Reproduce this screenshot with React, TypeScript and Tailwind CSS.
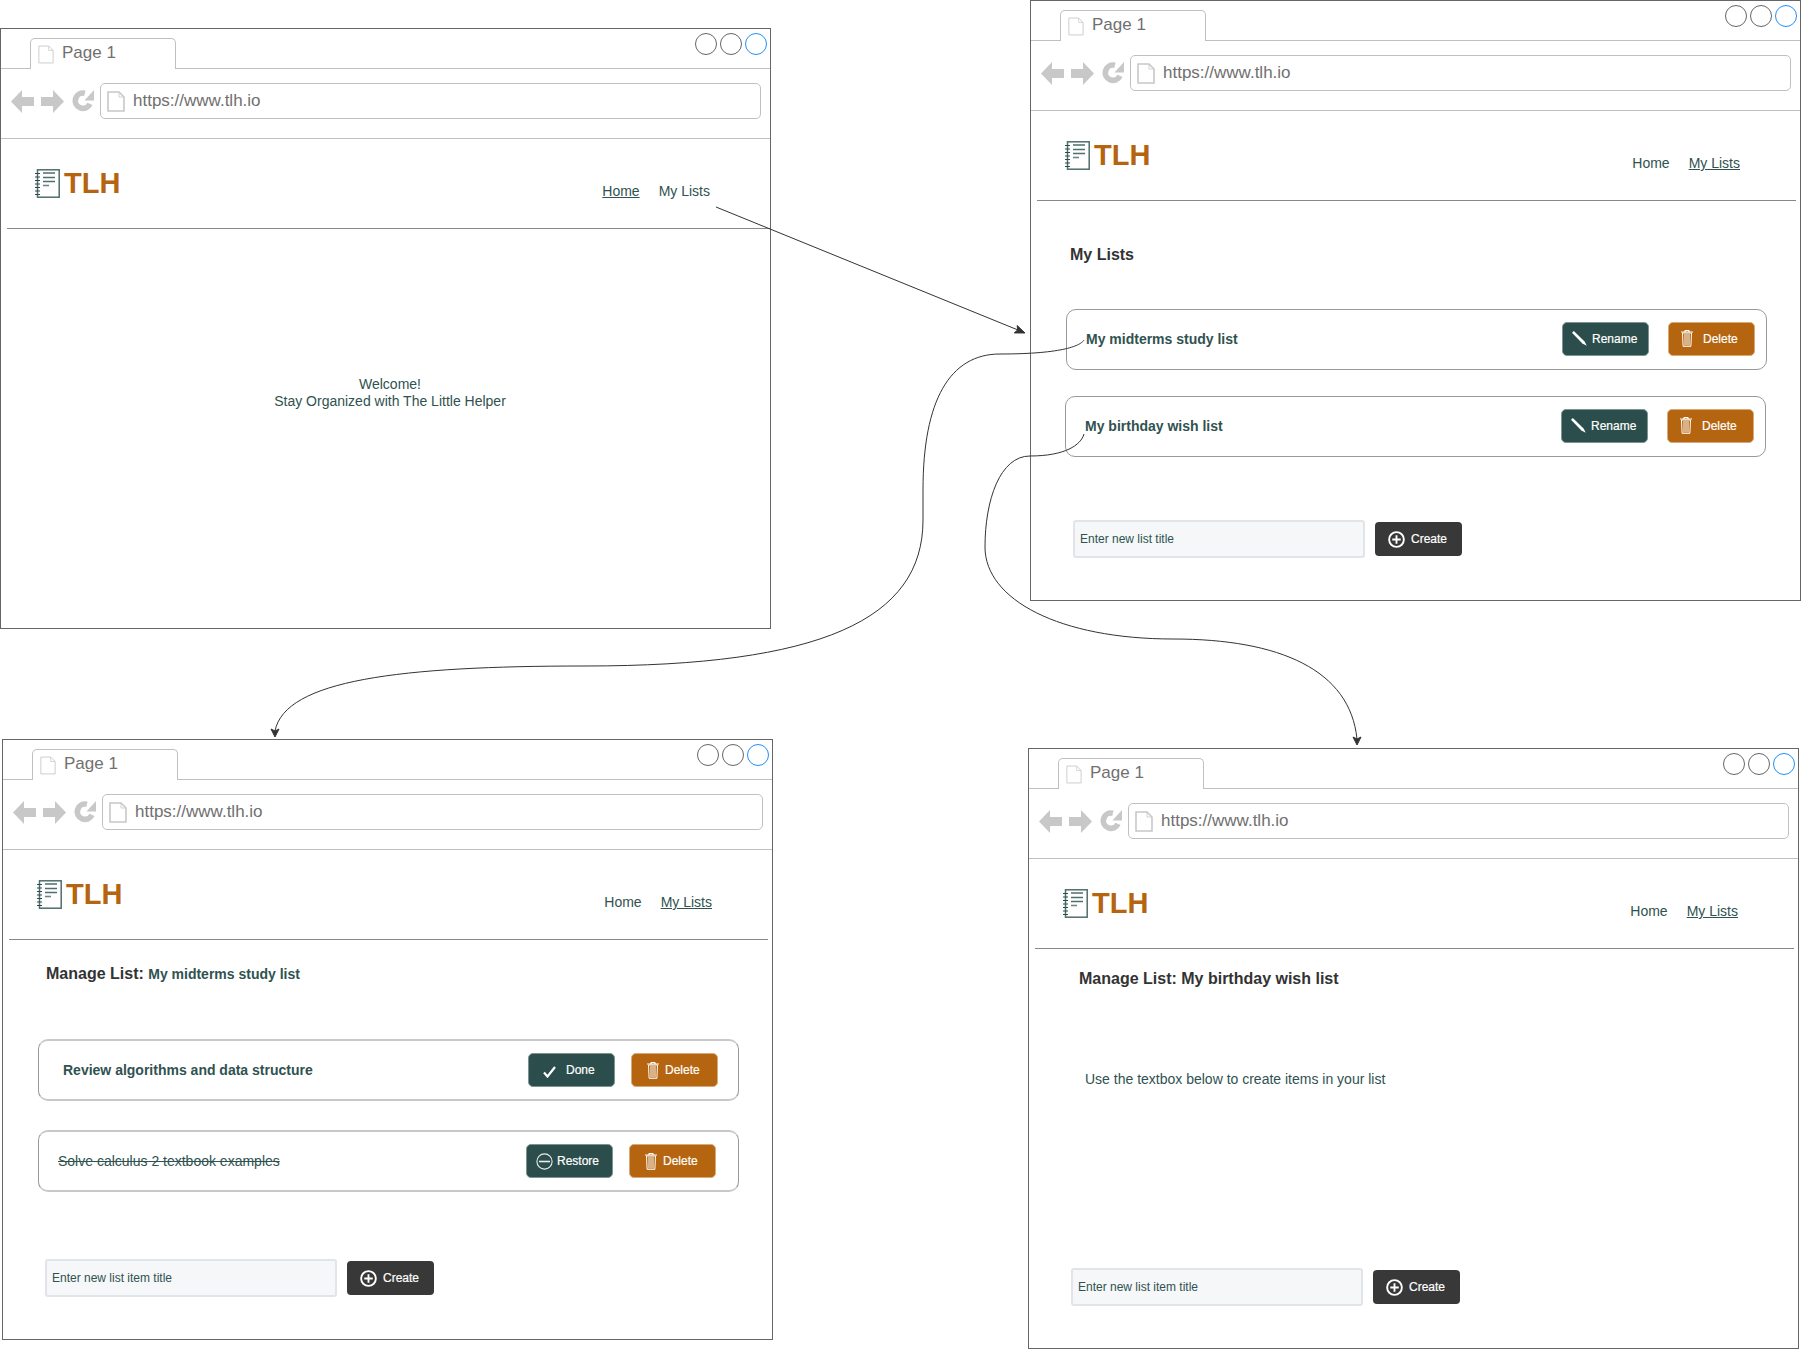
import type { ReactNode } from "react";

const PageIcon = ({ className, sw }: { className: string; sw: number }) => (
  <svg viewBox="0 0 18 21" className={className} fill="none" stroke="#c8c8c8" strokeWidth={sw}>
    <path d="M1 1h11l5 5v14H1z" />
    <path d="M12 1v5h5" strokeWidth={0.8} />
  </svg>
);

const NavArrows = () => (
  <div className="flex items-center h-[36px] shrink-0">
    <svg viewBox="0 0 23 23" className="w-[23px] h-[23px] mr-[7px]" fill="#c8c8c8">
      <path d="M0 11.5 11 0v7h12v9H11v7z" />
    </svg>
    <svg viewBox="0 0 23 23" className="w-[23px] h-[23px] mr-[8px]" fill="#c8c8c8">
      <path d="M23 11.5 12 0v7H0v9h12v7z" />
    </svg>
    <svg viewBox="0 0 23 23" className="w-[22px] h-[22px] mr-[6px]" fill="none">
      <path d="M18.8 14.5A8 8 0 1 1 13.5 3.4" stroke="#c8c8c8" strokeWidth={6} />
      <path d="M23 0V11H13z" fill="#c8c8c8" />
    </svg>
  </div>
);

const Notebook = () => (
  <svg viewBox="0 0 25 29" className="w-[25px] h-[29px] shrink-0" fill="none">
    <rect x="2.5" y="0.8" width="21.7" height="27.4" stroke="#4f6e6c" strokeWidth={1.5} />
    <path d="M0 4.5h5M0 8h5M0 11.5h5M0 15h5M0 18.5h5M0 22h5M0 25.5h5" stroke="#2b4e4c" strokeWidth={1.2} />
    <path d="M8 4h12M8 8.5h12M8 12.5h12" stroke="#4f6e6c" strokeWidth={1.3} />
    <path d="M8 16.5h6" stroke="#6d8785" strokeWidth={1.6} />
  </svg>
);

const Pencil = () => (
  <svg viewBox="0 0 15 15" className="w-[15px] h-[15px] shrink-0" fill="#fff">
    <path d="M1.8 0 12.6 10.6 14.8 14.8 10.4 12.4 0 1.8z" />
  </svg>
);

const Trash = () => (
  <svg viewBox="0 0 12 17" className="w-[12px] h-[17px] shrink-0" fill="none" stroke="#fff">
    <path d="M0 2h12M3.5 1.5 4.5.5h3l1 1" strokeWidth={1.2} />
    <path d="M1.5 3h9l-.6 13.3H2.1z" strokeWidth={1} />
    <path d="M4 4v11.5M6 4v11.5M8 4v11.5" strokeWidth={1} />
  </svg>
);

const Check = () => (
  <svg viewBox="0 0 13 12" className="w-[13px] h-[12px] shrink-0 mt-[3px]" fill="none" stroke="#fff" strokeWidth={2.2}>
    <path d="M1 6.5 4.5 10.5 12 1" />
  </svg>
);

const MinusCircle = () => (
  <svg viewBox="0 0 17 17" className="w-[17px] h-[17px] shrink-0" fill="none" stroke="#e8eded">
    <circle cx="8.5" cy="8.5" r="7.6" strokeWidth={1.1} />
    <path d="M3 8.5h11" strokeWidth={1.6} />
  </svg>
);

const PlusCircle = () => (
  <svg viewBox="0 0 18 18" className="w-[17px] h-[17px] shrink-0" fill="none" stroke="#fff" strokeWidth={2}>
    <circle cx="9" cy="9" r="7.8" />
    <path d="M4.5 9h9M9 4.5v9" />
  </svg>
);

const Button = ({
  tone,
  icon,
  label,
  pad,
  gap,
}: {
  tone: string;
  icon: ReactNode;
  label: string;
  pad: string;
  gap: string;
}) => (
  <div className={`flex items-center w-[87px] h-[34px] rounded-[5px] border text-xs text-white shrink-0 ${tone} ${pad} ${gap}`}>
    {icon}
    <span className="leading-[14px] [-webkit-text-stroke:0.2px_white]">{label}</span>
  </div>
);

const teal = "bg-[#2b4e4c] border-[#7c9492]";
const orange = "bg-[#b5650f] border-[#d8aa78]";

const CreateRow = ({ placeholder }: { placeholder: string }) => (
  <div className="flex items-center ml-[42px]">
    <input
      readOnly
      placeholder={placeholder}
      className="w-[292px] h-[38px] rounded-[3px] border-2 border-[#e1e4e8] bg-[#f5f7f9] pl-[5px] text-xs text-[#305250] placeholder:text-[#305250] outline-none"
    />
    <div className="flex items-center gap-[6px] ml-[10px] pl-[13px] w-[87px] h-[34px] rounded-[4px] bg-[#383838] text-xs text-white">
      <PlusCircle />
      <span className="leading-[14px] [-webkit-text-stroke:0.2px_white]">Create</span>
    </div>
  </div>
);

const Window = ({
  place,
  active,
  ruleEnd,
  children,
}: {
  place: string;
  active: "home" | "lists";
  ruleEnd: string;
  children: ReactNode;
}) => (
  <section className={`absolute w-[771px] h-[601px] border border-[#666] ${place}`}>
    <div className="flex justify-between h-[40px] border-b border-[#c0c0c0] pl-[29px] pr-[3px]">
      <div className="flex items-start gap-[8px] w-[146px] h-[31px] mt-[9px] pl-[7px] pt-[4px] -mb-px bg-white border border-b-0 border-[#c0c0c0] rounded-t-[5px] text-[17px] leading-[20px] text-[#707070]">
        <PageIcon className="w-[16px] h-[19px] mt-[2px]" sw={1} />
        <span>Page 1</span>
      </div>
      <div className="flex gap-[3px] pt-[4px]">
        <span className="w-[22px] h-[22px] rounded-full border border-[#666]" />
        <span className="w-[22px] h-[22px] rounded-full border border-[#666]" />
        <span className="w-[22px] h-[22px] rounded-full border border-[#1e90ff]" />
      </div>
    </div>
    <div className="flex items-start h-[70px] border-b border-[#c0c0c0] pl-[10px] pt-[14px]">
      <NavArrows />
      <div className="flex items-center gap-[8px] w-[661px] h-[36px] pl-[6px] rounded-[5px] border border-[#c0c0c0] text-[17px] text-[#707070]">
        <PageIcon className="w-[18px] h-[21px]" sw={1.6} />
        <span>https://www.tlh.io</span>
      </div>
    </div>
    <div className="flex justify-between h-[89px] pl-[34px] pr-[60px]">
      <div className="flex items-center gap-[4px] h-[29px] mt-[30px]">
        <Notebook />
        <span className="text-[29px] leading-[29px] font-bold text-[#b5650f]">TLH</span>
      </div>
      <div className="flex gap-[19px] pt-[44px] text-sm leading-[16px] text-[#305250]">
        <span className={active === "home" ? "underline" : ""}>Home</span>
        <span className={active === "lists" ? "underline" : ""}>My Lists</span>
      </div>
    </div>
    <div className={`h-px ml-[6px] bg-[#888] ${ruleEnd}`} />
    {children}
  </section>
);

const Connectors = () => (
  <svg viewBox="0 0 1801 1350" className="absolute inset-0 w-[1801px] h-[1350px] pointer-events-none" fill="none" stroke="#333" strokeWidth={1}>
    <path d="M716 207 1018 330" />
    <path d="M1017.2 325.5 1025 333 1014.2 332.9 1017.6 330z" fill="#333" />
    <path d="M1084 340C1081 345 1065 354 1000 354C950 354 923 400 923 490V520C923 620 820 666 585 666C400 666 285 680 275 731" />
    <path d="M271 729 275 731 279 729 275 737z" fill="#333" />
    <path d="M1084 434C1081 445 1065 456 1030 456C1000 456 985 500 985 547C985 600 1060 639 1173 639C1280 639 1350 670 1357 739" />
    <path d="M1353 737 1357 739 1361 737 1357 745z" fill="#333" />
  </svg>
);

export default function App() {
  return (
    <div className="relative w-[1801px] h-[1350px] overflow-hidden bg-white font-['Liberation_Sans',Arial,sans-serif] text-[#305250]">
      <Window place="left-0 top-[28px]" active="home" ruleEnd="mr-0">
        <p className="pt-[147px] pl-[9px] text-center text-sm leading-[17px]">
          Welcome!
          <br />
          Stay Organized with The Little Helper
        </p>
      </Window>

      <Window place="left-[1030px] top-0" active="lists" ruleEnd="mr-[4px]">
        <h2 className="mt-[45px] ml-[39px] text-base leading-[18px] font-bold text-[#333]">My Lists</h2>
        <div className="flex items-center justify-between mt-[45px] ml-[35px] w-[701px] h-[61px] pl-[19px] pr-[11px] pb-[2px] rounded-[10px] border border-[#999]">
          <span className="text-sm font-bold">My midterms study list</span>
          <div className="flex gap-[19px]">
            <Button tone={teal} icon={<Pencil />} label="Rename" pad="pl-[9px]" gap="gap-[5px]" />
            <Button tone={orange} icon={<Trash />} label="Delete" pad="pl-[12px]" gap="gap-[10px]" />
          </div>
        </div>
        <div className="flex items-center justify-between mt-[26px] ml-[34px] w-[701px] h-[61px] pl-[19px] pr-[11px] pb-[2px] rounded-[10px] border border-[#999]">
          <span className="text-sm font-bold">My birthday wish list</span>
          <div className="flex gap-[19px]">
            <Button tone={teal} icon={<Pencil />} label="Rename" pad="pl-[9px]" gap="gap-[5px]" />
            <Button tone={orange} icon={<Trash />} label="Delete" pad="pl-[12px]" gap="gap-[10px]" />
          </div>
        </div>
        <div className="mt-[63px]">
          <CreateRow placeholder="Enter new list title" />
        </div>
      </Window>

      <Window place="left-[2px] top-[739px]" active="lists" ruleEnd="mr-[4px]">
        <h2 className="mt-[24px] ml-[43px] text-base leading-[18px] font-bold text-[#333]">
          Manage List: <span className="text-sm text-[#305250]">My midterms study list</span>
        </h2>
        <div className="flex items-center justify-between mt-[55px] ml-[35px] w-[701px] h-[62px] pl-[24px] pr-[20px] rounded-[10px] border-x border-y-2 border-x-[#999] border-y-[#c8c8c8]">
          <span className="text-sm font-bold">Review algorithms and data structure</span>
          <div className="flex gap-[16px]">
            <Button tone={teal} icon={<Check />} label="Done" pad="pl-[14px]" gap="gap-[10px]" />
            <Button tone={orange} icon={<Trash />} label="Delete" pad="pl-[15px]" gap="gap-[6px]" />
          </div>
        </div>
        <div className="flex items-center justify-between mt-[29px] ml-[35px] w-[701px] h-[62px] pl-[19px] pr-[22px] rounded-[10px] border-x border-y-2 border-x-[#999] border-y-[#c8c8c8]">
          <span className="text-sm line-through">Solve calculus 2 textbook examples</span>
          <div className="flex gap-[16px]">
            <Button tone={teal} icon={<MinusCircle />} label="Restore" pad="pl-[9px]" gap="gap-[4px]" />
            <Button tone={orange} icon={<Trash />} label="Delete" pad="pl-[15px]" gap="gap-[6px]" />
          </div>
        </div>
        <div className="mt-[67px]">
          <CreateRow placeholder="Enter new list item title" />
        </div>
      </Window>

      <Window place="left-[1028px] top-[748px]" active="lists" ruleEnd="mr-[4px]">
        <h2 className="mt-[21px] ml-[50px] text-base leading-[18px] font-bold text-[#333]">Manage List: My birthday wish list</h2>
        <p className="mt-[83px] ml-[56px] text-sm leading-[16px]">Use the textbox below to create items in your list</p>
        <div className="mt-[181px]">
          <CreateRow placeholder="Enter new list item title" />
        </div>
      </Window>

      <Connectors />
    </div>
  );
}
